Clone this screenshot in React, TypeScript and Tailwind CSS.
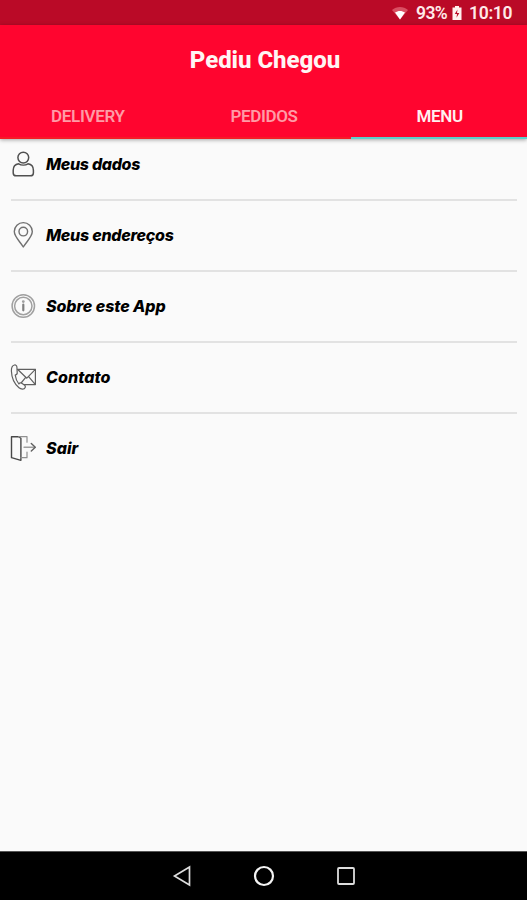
import React from "react";

const strokeProps = {
  fill: "none",
  stroke: "currentColor",
  strokeLinecap: "round" as const,
  strokeLinejoin: "round" as const,
};

function UserIcon() {
  return (
    <svg width="26" height="28" viewBox="0 0 26 28" {...strokeProps} strokeWidth="1.5" className="text-[#505050]">
      <circle cx="13.3" cy="7.6" r="5.4" />
      <path d="M8.6 13.8C5 14.4 3.2 17 3.2 20.3V22.9C3.2 24.9 4.4 25.8 6.2 25.8H20.4C22.3 25.8 23.4 24.9 23.4 22.9V20.3C23.4 17 21.6 14.4 18 13.8C15.4 15.5 11.2 15.5 8.6 13.8Z" />
    </svg>
  );
}

function PinIcon() {
  return (
    <svg width="26" height="28" viewBox="0 0 26 28" {...strokeProps} strokeWidth="1.4" className="text-[#707070]">
      <path d="M13.3 26C10 20.5 4.3 15.8 4.3 10.6a9 9 0 0 1 18 0C22.3 15.8 16.6 20.5 13.3 26Z" />
      <circle cx="13.3" cy="10.6" r="4.3" />
    </svg>
  );
}

function InfoIcon() {
  return (
    <svg width="26" height="28" viewBox="0 0 26 28" {...strokeProps} strokeWidth="1.5" className="text-[#a0a0a0]">
      <circle cx="13.3" cy="14" r="11.2" />
      <circle cx="13.3" cy="14" r="8.7" />
      <circle cx="13.3" cy="9.6" r="0.7" fill="currentColor" />
      <path d="M13.3 12.7v5.6" strokeWidth="2.2" className="text-[#808080]" />
    </svg>
  );
}

function ContactIcon() {
  return (
    <svg width="26" height="28" viewBox="0 0 26 28" {...strokeProps} strokeWidth="1.2" className="text-[#606060]">
      <path d="M7.5 6.3h17.9v15.3H14.5M7.5 6.3l9.3 8.9 8.6-8.9M11.5 19.5l4-4.8M25.4 21.6l-6.8-8" />
      <path d="M4.5 2C2.3 2.5 1.3 5 1.4 8c.2 6.5 2.8 12.7 7.6 16.8 2.2 1.8 5.3 1.7 6.2-.4.4-.9.1-1.6-.5-2.1l-2.9-2.1c-1.1-.8-2.3-.3-2.9.8C6.8 18.3 5.6 15.5 5.2 12c1.5-.3 2.2-1.1 2-2.4L6.9 4C6.7 2.6 5.7 1.7 4.5 2Z" />
    </svg>
  );
}

function ExitIcon() {
  return (
    <svg width="26" height="28" viewBox="0 0 26 28" {...strokeProps} strokeWidth="1.4">
      <path className="text-[#484848]" d="M1.5 2.7h7.2l2.2 1.6v22L1.5 23.7Z" />
      <path className="text-[#909090]" d="M8.7 2.7H17v5.5M10.9 23.7H17v-5.6" strokeWidth="1.2" />
      <path className="text-[#a0a0a0]" d="M14 13.3h10.5" />
      <path className="text-[#606060]" d="M21.3 9.5l4 3.8-4 3.8" />
    </svg>
  );
}

const items = [
  { label: "Meus dados", Icon: UserIcon, tracking: "tracking-[-0.31px]" },
  { label: "Meus endereços", Icon: PinIcon, tracking: "tracking-[-0.26px]" },
  { label: "Sobre este App", Icon: InfoIcon, tracking: "tracking-[-0.05px]" },
  { label: "Contato", Icon: ContactIcon, tracking: "tracking-[0.08px]" },
  { label: "Sair", Icon: ExitIcon, tracking: "tracking-[0.08px]" },
];

function StatusBar() {
  return (
    <div className="flex h-[25px] shrink-0 items-center justify-end bg-[#ba0a27] pr-[15px] pt-px text-[17.5px] font-semibold text-[#ffe9e9]">
      <svg width="18" height="16" viewBox="0 0 18 16" className="mr-[7px]">
        <path d="M1 5C5.5 1 12.5 1 17 5L9 14.5Z" fill="#d94f62" />
        <path d="M4 7.6c3-2.1 7-2.1 10 0L9 14.5Z" fill="#fff" />
      </svg>
      <span className="w-[32px] whitespace-nowrap tracking-[-0.6px]">93%</span>
      <svg width="10" height="15" viewBox="0 0 10 15" className="ml-[4px] mr-[7px]">
        <path d="M3 0h4v1.5h2.5V14h-9V1.5H3Z" fill="#fff0ef" />
        <path d="M5.5 3.5 2.8 8H5l-.5 3.7L7.3 7H5Z" fill="#ba0a27" />
      </svg>
      <span className="w-[43px] whitespace-nowrap tracking-[-0.3px]">10:10</span>
    </div>
  );
}

export default function App() {
  return (
    <div className="flex h-[900px] w-[527px] flex-col overflow-hidden bg-[#fafafa] font-['Roboto',sans-serif]">
      <StatusBar />
      <header className="flex h-[114px] shrink-0 flex-col bg-[#ff052f] shadow-[0_1px_4px_rgba(0,0,0,0.35)]">
        <h1 className="flex h-[69px] items-center justify-center pl-[3px] pt-px text-[24px] font-extrabold tracking-[-0.05px] text-[#fff5f4]">Pediu Chegou</h1>
        <nav className="grid h-[45px] grid-cols-3 text-[17px] font-semibold leading-[44px] tracking-[-0.35px]">
          <span className="h-[45px] border-b-2 border-[#f51c26] text-center text-[#ff9ba6]">DELIVERY</span>
          <span className="h-[45px] border-b-2 border-[#f51c26] pl-px text-center text-[#ff9ba6]">PEDIDOS</span>
          <span className="h-[45px] border-b-2 border-[#5bd0cb] pl-px text-center text-[#fff0f0]">MENU</span>
        </nav>
      </header>
      <main className="flex-1 pl-[11px] pr-[10px]">
        {items.map(({ label, Icon, tracking }, i) => (
          <div
            key={label}
            className={`flex items-start ${i === 0 ? "h-[62px] pt-[11px]" : "h-[71px] pt-[20px]"} ${i < items.length - 1 ? "border-b-2 border-[#e2e2e2]" : ""}`}
          >
            <span className="-ml-px mr-[10px] w-[26px]">
              <Icon />
            </span>
            <span
              className={`whitespace-nowrap font-['Inter',sans-serif] text-[16px] font-extrabold italic leading-[28px] text-black [font-feature-settings:'cv11'_1] ${tracking}`}
            >
              {label}
            </span>
          </div>
        ))}
      </main>
      <footer className="flex h-[49px] shrink-0 items-center justify-center gap-[61px] border-t border-[#555] bg-black">
        <svg width="20" height="22" viewBox="0 0 20 22" fill="none" stroke="#ddd" strokeWidth="1.7">
          <path d="M17.5 2v18L2.5 11Z" />
        </svg>
        <svg width="22" height="22" viewBox="0 0 22 22" fill="none" stroke="#f4f4f4" strokeWidth="2.2">
          <circle cx="11" cy="11" r="9" />
        </svg>
        <svg width="20" height="20" viewBox="0 0 20 20" fill="none" stroke="#ddd" strokeWidth="1.8">
          <rect x="2" y="2" width="16" height="16" rx="1" />
        </svg>
      </footer>
    </div>
  );
}
